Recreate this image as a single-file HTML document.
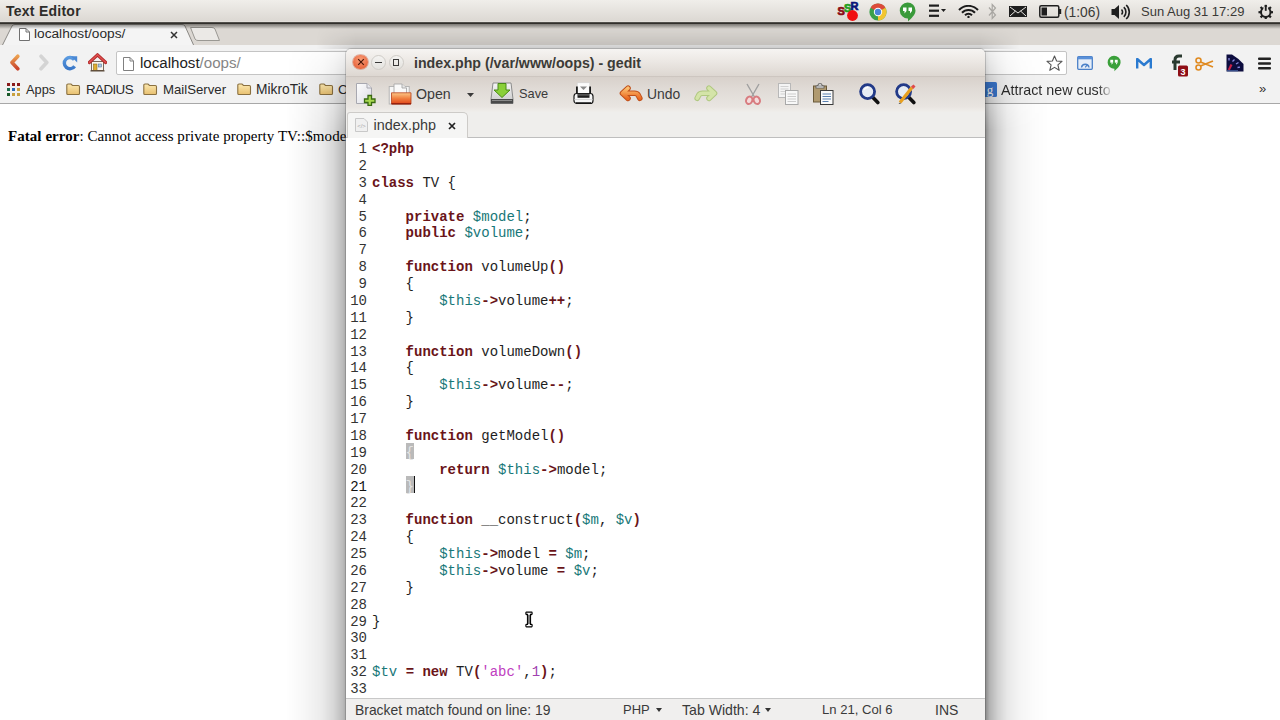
<!DOCTYPE html>
<html><head><meta charset="utf-8">
<style>
*{margin:0;padding:0;box-sizing:border-box}
html,body{width:1280px;height:720px;overflow:hidden;background:#fff;font-family:"Liberation Sans",sans-serif;position:relative}
.a{position:absolute}
#panel{left:0;top:0;width:1280px;height:24px;background:linear-gradient(#f0eeea,#dcd8d3 88%,#ece9e5 92%,#3a3834 94%,#2e2c28);}
#pshadow{left:0;top:24px;width:1280px;height:5px;background:linear-gradient(rgba(40,38,34,.55),rgba(40,38,34,0))}
#panel .t{left:6px;top:3px;font-size:14px;letter-spacing:0.25px;font-weight:bold;color:#2e2d2a}
#tabstrip{left:0;top:24px;width:1280px;height:22px;background:#dcd8d3}
#ctoolbar{left:0;top:45px;width:1280px;height:59px;background:#f2f2f2;border-bottom:1px solid #a8a8a8}
#omni{left:116px;top:51px;width:951px;height:24px;background:#fff;border:1px solid #c4c4c4;border-radius:2px}
#content{left:0;top:104px;width:1280px;height:616px;background:#fff}
#fatal{left:8px;top:128px;font-family:"Liberation Serif",serif;font-size:15px;letter-spacing:0.05px;color:#000;white-space:nowrap}
#gedit{left:346px;top:49px;width:639px;height:671px;background:#f2f1f0;border-radius:5px 5px 0 0;overflow:hidden;box-shadow:0 0 0 1px rgba(60,60,60,.22)}
#shl{left:286px;top:50px;width:60px;height:670px;-webkit-mask-image:linear-gradient(rgba(0,0,0,.15),#000 80px);background:linear-gradient(90deg,rgba(0,0,0,0),rgba(0,0,0,.03) 30%,rgba(0,0,0,.08) 60%,rgba(0,0,0,.16) 80%,rgba(0,0,0,.27) 95%,rgba(0,0,0,.34))}
#shr{left:985px;top:50px;width:64px;height:670px;-webkit-mask-image:linear-gradient(rgba(0,0,0,.2),#000 80px);background:linear-gradient(90deg,rgba(0,0,0,.48),rgba(0,0,0,.3) 7%,rgba(0,0,0,.18) 20%,rgba(0,0,0,.09) 35%,rgba(0,0,0,.04) 55%,rgba(0,0,0,.015) 75%,rgba(0,0,0,0))}
#sht{left:316px;top:24px;width:704px;height:25px;background:linear-gradient(rgba(0,0,0,0),rgba(0,0,0,.04) 40%,rgba(0,0,0,.11) 85%,rgba(0,0,0,.16));-webkit-mask-image:linear-gradient(90deg,transparent,#000 40px,#000 664px,transparent)}
#gtitle{left:0;top:0;width:639px;height:27px;background:linear-gradient(#f6f4f2,#ece8e4 45%,#ddd7d1);border-radius:5px 5px 0 0}
#gtool{left:0;top:27px;width:639px;height:36px;background:linear-gradient(#d8d1cb,#e0dbd6 35%,#e9e5e1 85%,#f0eeeb);border-top:1px solid #cdc6c0}
#gtabs{left:0;top:63px;width:639px;height:26px;background:#efeeec;border-bottom:1px solid #bebebe}
#editor{left:0;top:89px;width:639px;height:560px;background:#fff}
#status{left:0;top:649px;width:639px;height:22px;background:#f0efee;border-top:1px solid #c8c8c8}
.code{font-family:"Liberation Mono",monospace;font-size:14px;line-height:16.875px;white-space:pre;color:#333}
#lnums{left:0;top:3px;width:21px;text-align:right;color:#333}
#lnums b{font-weight:normal;color:#111}
#codetext{left:26px;top:3px;color:#1e1e1e}
.k{font-weight:bold;color:#6a1419}
.o{font-weight:bold;color:#6a1419}
.v{color:#187878}
.s{color:#c040c0}
.n{color:#a040b0}
.hl{color:#e4e4e4;position:relative;z-index:2}
.hlb{background:#bababa;width:7.6px;height:16.4px;left:60px}
#cursor{left:68px;top:338px;width:1px;height:17px;background:#111}
.pt{top:3.5px;font-size:13px;color:#3a3936}
.bm{top:82px;font-size:13.4px;color:#2a2a2a;white-space:nowrap}
.fold{top:83px;width:15px;height:13px}
#omni,#tabstrip div{white-space:nowrap}
.gl{top:9px;color:#3a3a3a;white-space:nowrap}
.st{top:3px;color:#3a3a3a;white-space:nowrap}
</style></head><body>
<div id="panel" class="a">
 <div class="a t">Text Editor</div>
 <!-- SSR -->
 <svg class="a" style="left:836px;top:0px" width="26" height="23" viewBox="0 0 26 23">
  <g font-family="Liberation Sans" font-weight="bold" style="font-weight:bold">
  <text x="1.5" y="15" font-size="11" fill="#8a0c14" stroke="#8a0c14" stroke-width="0.7">S</text>
  <text x="8" y="11.5" font-size="11" fill="#1e9e1e" stroke="#1e9e1e" stroke-width="0.7">S</text>
  <text x="14.5" y="10" font-size="11" fill="#0a1478" stroke="#0a1478" stroke-width="0.7">R</text>
  </g>
  <circle cx="16.5" cy="15.5" r="5.4" fill="#f01010"/>
 </svg>
 <!-- chrome -->
 <svg class="a" style="left:869px;top:3px" width="18" height="18" viewBox="0 0 18 18">
  <circle cx="9" cy="9" r="8.6" fill="#3aa04a"/>
  <path d="M9 9 L1.6 4.7 A8.6 8.6 0 0 1 16.4 4.7 Z" fill="#dd4a3a"/>
  <path d="M9 9 L16.4 4.7 A8.6 8.6 0 0 1 9 17.6 Z" fill="#f2c530"/>
  <circle cx="9" cy="9" r="4.2" fill="#fff"/>
  <circle cx="9" cy="9" r="3.2" fill="#4a86d8"/>
 </svg>
 <!-- hangouts -->
 <svg class="a" style="left:899px;top:2px" width="17" height="20" viewBox="0 0 17 20">
  <path d="M8.5 0.5 A8 8 0 0 1 16.5 8.5 C16.5 13 12 16.5 9 19.5 L9 16.5 A8 8 0 0 1 8.5 0.5 Z" fill="#3a9a3a"/>
  <rect x="4" y="5.5" width="3.5" height="3.5" fill="#fff"/><rect x="9.5" y="5.5" width="3.5" height="3.5" fill="#fff"/>
  <path d="M5.5 9 L5.5 11.5 L7.5 9Z M11 9 L11 11.5 L13 9Z" fill="#fff"/>
 </svg>
 <!-- menu -->
 <svg class="a" style="left:929px;top:4px" width="18" height="14" viewBox="0 0 18 14">
  <rect x="0" y="0.5" width="10" height="2.2" fill="#1e1e1e"/><rect x="0" y="5.6" width="10" height="2.2" fill="#1e1e1e"/><rect x="0" y="10.7" width="10" height="2.2" fill="#1e1e1e"/>
  <path d="M12 5 L17 5 L14.5 8Z" fill="#1e1e1e"/>
 </svg>
 <!-- wifi -->
 <svg class="a" style="left:958px;top:5px" width="21" height="13" viewBox="0 0 21 13">
  <path d="M1 5 A13 13 0 0 1 20 5" stroke="#1a1a1a" stroke-width="2" fill="none"/>
  <path d="M4 7.8 A9 9 0 0 1 17 7.8" stroke="#1a1a1a" stroke-width="2" fill="none"/>
  <path d="M7 10.3 A5 5 0 0 1 14 10.3" stroke="#1a1a1a" stroke-width="2" fill="none"/>
  <circle cx="10.5" cy="12" r="1.2" fill="#1a1a1a"/>
 </svg>
 <!-- bluetooth -->
 <svg class="a" style="left:988px;top:3px" width="9" height="17" viewBox="0 0 9 17">
  <path d="M1 4.5 L7.5 12 L4.2 15.5 L4.2 1.5 L7.5 5 L1 12.5" stroke="#a8a6a2" stroke-width="1.2" fill="none"/>
 </svg>
 <!-- mail -->
 <svg class="a" style="left:1009px;top:6px" width="18" height="11" viewBox="0 0 18 11">
  <rect x="0" y="0" width="18" height="11" fill="#1e1e1e"/>
  <path d="M1 1 L9 7 L17 1 M1 10 L6.5 5 M17 10 L11.5 5" stroke="#e8e6e2" stroke-width="1" fill="none"/>
 </svg>
 <!-- battery -->
 <svg class="a" style="left:1039px;top:5px" width="23" height="13" viewBox="0 0 23 13">
  <rect x="0.8" y="0.8" width="19" height="11.4" rx="1.5" stroke="#1e1e1e" stroke-width="1.5" fill="none"/>
  <rect x="20" y="4" width="2.2" height="5" fill="#1e1e1e"/>
  <rect x="2.5" y="2.5" width="5.5" height="8" fill="#1e1e1e"/>
 </svg>
 <div class="a pt" style="left:1064px;top:4.5px;font-size:13.8px">(1:06)</div>
 <!-- speaker -->
 <svg class="a" style="left:1111px;top:4px" width="20" height="16" viewBox="0 0 20 16">
  <path d="M0.5 5 L3.5 5 L8 1 L8 15 L3.5 11 L0.5 11Z" fill="#1e1e1e"/>
  <path d="M10.5 5.5 A3.5 3.5 0 0 1 10.5 10.5" stroke="#1e1e1e" stroke-width="1.6" fill="none"/>
  <path d="M12.8 3.2 A6.5 6.5 0 0 1 12.8 12.8" stroke="#1e1e1e" stroke-width="1.6" fill="none"/>
  <path d="M15.2 1 A9.5 9.5 0 0 1 15.2 15" stroke="#1e1e1e" stroke-width="1.6" fill="none"/>
 </svg>
 <div class="a pt" style="left:1141px">Sun Aug 31 17:29</div>
 <!-- power gear -->
 <svg class="a" style="left:1257.5px;top:3.5px" width="15.5" height="15.5" viewBox="0 0 17 17">
  <g transform="translate(8.5 9)">
   <circle r="5.2" stroke="#1e1e1e" stroke-width="2.2" fill="none"/>
   <g fill="#1e1e1e"><rect x="-1.2" y="-8" width="2.4" height="3"/><rect x="-1.2" y="5" width="2.4" height="3"/><rect x="5" y="-1.2" width="3" height="2.4"/><rect x="-8" y="-1.2" width="3" height="2.4"/>
   <rect x="-1.2" y="-8" width="2.4" height="3" transform="rotate(45)"/><rect x="-1.2" y="-8" width="2.4" height="3" transform="rotate(-45)"/><rect x="-1.2" y="5" width="2.4" height="3" transform="rotate(45)"/><rect x="-1.2" y="5" width="2.4" height="3" transform="rotate(-45)"/></g>
   <rect x="-2.6" y="-6" width="5.2" height="5" fill="#e4e1dc"/>
   <rect x="-1" y="-8" width="2" height="6.5" fill="#1e1e1e"/>
  </g>
 </svg>
</div>
<div id="tabstrip" class="a" style="z-index:0">
 <svg class="a" style="left:0;top:-1px" width="230" height="23" viewBox="0 0 230 23">
  <path d="M-10 23 L2 23 L12 3 Q13 1.5 15 1.5 L182 1.5 Q184 1.5 185 3 L194 23 L230 23" fill="#f4f4f4" stroke="#8a8884" stroke-width="1"/>
  <path d="M190.5 4.5 L212 4.5 Q214 4.5 215 6 L219.5 17.5 L198 17.5 Q196 17.5 195 16 Z" fill="#ebe9e6" stroke="#9a9893" stroke-width="1"/><path d="M192 5.5 L212 5.5 L213.5 7" stroke="#f6f5f3" stroke-width="1" fill="none"/>
 </svg>
 <svg class="a" style="left:19px;top:4px" width="11" height="13" viewBox="0 0 11 13">
  <path d="M0.5 0.5 L7 0.5 L10.5 4 L10.5 12.5 L0.5 12.5Z" fill="#fff" stroke="#707070" stroke-width="1"/>
  <path d="M7 0.5 L7 4 L10.5 4" fill="none" stroke="#707070" stroke-width="1"/>
 </svg>
 <div class="a" style="left:34px;top:2px;font-size:13.7px;color:#2a2a2a">localhost/oops/</div>
 <svg class="a" style="left:170px;top:7px" width="8" height="8" viewBox="0 0 8 8"><path d="M1 1L7 7M7 1L1 7" stroke="#333" stroke-width="1.5"/></svg>
</div>
<div id="pshadow" class="a"></div>
<div id="ctoolbar" class="a"></div>
<svg class="a" style="left:9px;top:54px" width="12" height="17" viewBox="0 0 12 17"><defs><linearGradient id="bkg" x1="0" y1="0" x2="0" y2="1"><stop offset="0" stop-color="#eca050"/><stop offset="1" stop-color="#c8442c"/></linearGradient></defs><path d="M8.8 2.2 L3 8.5 L8.8 14.8" stroke="url(#bkg)" stroke-width="3.6" fill="none" stroke-linecap="round" stroke-linejoin="round"/></svg>
<svg class="a" style="left:38px;top:54px" width="12" height="17" viewBox="0 0 12 17"><path d="M3 2.2 L8.8 8.5 L3 14.8" stroke="#d4d4d4" stroke-width="3.6" fill="none" stroke-linecap="round" stroke-linejoin="round"/></svg>
<svg class="a" style="left:62px;top:55px" width="16" height="16" viewBox="0 0 16 16"><defs><linearGradient id="rlg" x1="0" y1="0" x2="0" y2="1"><stop offset="0" stop-color="#5a9ae0"/><stop offset="1" stop-color="#3a78c8"/></linearGradient></defs><path d="M12.3 4.6 A5.6 5.6 0 1 0 12.6 11.2" stroke="url(#rlg)" stroke-width="3.4" fill="none"/><path d="M9 1.2 L15.2 1.2 L15.2 7.4 Z" fill="#4a88d4"/></svg>
<svg class="a" style="left:88px;top:53px" width="19" height="19" viewBox="0 0 19 19"><rect x="3.5" y="8.5" width="12" height="9" fill="#faf6ee" stroke="#6a5a4a" stroke-width="0.9"/><rect x="5.5" y="11" width="3.5" height="6.5" fill="#e0b030" stroke="#8a6a20" stroke-width="0.6"/><rect x="10.5" y="11" width="3" height="3" fill="#a8c8e8" stroke="#5a7a9a" stroke-width="0.6"/><path d="M1.3 9.5 L9.5 1.8 L17.7 9.5" stroke="#b02a2a" stroke-width="3.2" fill="none" stroke-linejoin="round" stroke-linecap="round"/><path d="M1.3 9.5 L9.5 1.8 L17.7 9.5" stroke="#e05050" stroke-width="1.4" fill="none" stroke-linejoin="round" stroke-linecap="round"/><rect x="2.5" y="17.2" width="14" height="1.3" fill="#5a4a3a"/></svg>
<div id="omni" class="a">
 <svg class="a" style="left:6px;top:5px" width="11" height="14" viewBox="0 0 11 14">
  <path d="M0.5 0.5 L7 0.5 L10.5 4 L10.5 13.5 L0.5 13.5Z" fill="#fff" stroke="#808080" stroke-width="1"/>
  <path d="M7 0.5 L7 4 L10.5 4" fill="none" stroke="#808080" stroke-width="1"/>
 </svg>
 <div class="a" style="left:23px;top:2px;font-size:15.1px;color:#222">localhost<span style="color:#858585">/oops/</span></div>
 <svg class="a" style="left:929px;top:3px" width="17" height="17" viewBox="0 0 17 17"><path d="M8.5 1 L10.6 6 L16 6.4 L11.9 9.9 L13.2 15.3 L8.5 12.4 L3.8 15.3 L5.1 9.9 L1 6.4 L6.4 6Z" fill="#fff" stroke="#555" stroke-width="1.1" stroke-linejoin="round"/></svg>
</div>
<!-- extension icons -->
<svg class="a" style="left:1077px;top:56px" width="16" height="14" viewBox="0 0 16 14"><rect x="0.7" y="0.7" width="14.6" height="12.6" rx="1" fill="#e6eef8" stroke="#4a80c8" stroke-width="1.3"/><rect x="0.7" y="0.7" width="14.6" height="2.6" fill="#5a90d8"/><path d="M4.5 11.5 A3.8 3.8 0 0 1 12 11.5" stroke="#4a80c8" stroke-width="1.4" fill="none"/><path d="M8.2 11.3 L10.5 8.5" stroke="#4a80c8" stroke-width="1.2"/></svg>
<svg class="a" style="left:1107px;top:55px" width="14" height="17" viewBox="0 0 17 20"><path d="M8.5 0.5 A8 8 0 0 1 16.5 8.5 C16.5 13 12 16.5 9 19.5 L9 16.5 A8 8 0 0 1 8.5 0.5 Z" fill="#3aa03a"/><rect x="4" y="5.5" width="3.5" height="3.5" fill="#fff"/><rect x="9.5" y="5.5" width="3.5" height="3.5" fill="#fff"/><path d="M5.5 9 L5.5 11.5 L7.5 9Z M11 9 L11 11.5 L13 9Z" fill="#fff"/></svg>
<svg class="a" style="left:1136px;top:58px" width="16" height="11" viewBox="0 0 16 11"><path d="M1.2 10.5 L1.2 1 L8 7 L14.8 1 L14.8 10.5" stroke="#2a7ad0" stroke-width="2.4" fill="none" stroke-linejoin="round"/></svg>
<svg class="a" style="left:1171px;top:54px" width="18" height="24" viewBox="0 0 18 24"><path d="M4 16 L4 6 Q4 2 8 2 L11 2 M1 8 L9 8" stroke="#2a3a30" stroke-width="3" fill="none"/><rect x="7" y="11.5" width="10" height="11" rx="1.5" fill="#8e0e16"/><text x="12" y="21" font-family="Liberation Sans" font-weight="bold" font-size="9" fill="#fff" text-anchor="middle">3</text></svg>
<svg class="a" style="left:1195px;top:57px" width="19" height="14" viewBox="0 0 19 14"><circle cx="3.5" cy="3.5" r="2.5" stroke="#e08a20" stroke-width="1.6" fill="none"/><circle cx="3.5" cy="10.5" r="2.5" stroke="#e08a20" stroke-width="1.6" fill="none"/><path d="M5.5 5 L18 10 M5.5 9 L18 4" stroke="#e08a20" stroke-width="1.8"/></svg>
<svg class="a" style="left:1225.5px;top:54px" width="18" height="18" viewBox="0 0 18 18"><path d="M0.5 0.5 L6 0.5 Q12 4 17.5 10 L17.5 17.5 L0.5 17.5 Z" fill="#0c0c3e"/><path d="M3 4 L3 6.5 M6.5 7.5 L8.5 5.5 M10 10 L12.5 8.5 M11.5 13.5 L14 13.2" stroke="#8a8ae0" stroke-width="1.3"/><path d="M2.8 16 L5.5 10.5" stroke="#c82048" stroke-width="2.2"/><rect x="1" y="16.3" width="11" height="1" fill="#4a6aa8"/></svg>
<svg class="a" style="left:1258px;top:57px" width="14" height="13" viewBox="0 0 14 13"><rect x="0" y="0.5" width="13" height="2.4" rx="1" fill="#222"/><rect x="0" y="5.3" width="13" height="2.4" rx="1" fill="#222"/><rect x="0" y="10.1" width="13" height="2.4" rx="1" fill="#222"/></svg>
<!-- bookmarks -->
<svg class="a" style="left:7px;top:83px" width="14" height="13" viewBox="0 0 14 13">
 <rect x="0" y="0" width="3" height="3" fill="#8a1c1c"/><rect x="5" y="0" width="3" height="3" fill="#8a1c1c"/><rect x="10" y="0" width="3" height="3" fill="#8a1c1c"/>
 <rect x="0" y="5" width="3" height="3" fill="#1a6a4a"/><rect x="5" y="5" width="3" height="3" fill="#2a6ab8"/><rect x="10" y="5" width="3" height="3" fill="#c8a040"/>
 <rect x="0" y="10" width="3" height="3" fill="#1a5a2a"/><rect x="5" y="10" width="3" height="3" fill="#c8a040"/><rect x="10" y="10" width="3" height="3" fill="#c8a040"/>
</svg>
<div class="a bm" style="left:26px;font-size:12.8px">Apps</div>
<svg class="a fold" style="left:66px"><use href="#folder"/></svg>
<div class="a bm" style="left:86px;letter-spacing:-0.6px">RADIUS</div>
<svg class="a fold" style="left:143px"><use href="#folder"/></svg>
<div class="a bm" style="left:163px;font-size:13.2px">MailServer</div>
<svg class="a fold" style="left:237px"><use href="#folder"/></svg>
<div class="a bm" style="left:256px;font-size:13.8px">MikroTik</div>
<svg class="a fold" style="left:319px"><use href="#folder"/></svg>
<div class="a bm" style="left:338px">C</div>
<svg class="a" style="left:983px;top:82px" width="14" height="15" viewBox="0 0 14 15"><rect x="0" y="0" width="14" height="15" rx="1.5" fill="#3a78d0"/><text x="7" y="12" font-family="Liberation Serif" font-size="13" fill="#fff" text-anchor="middle">g</text></svg>
<div class="a bm" style="left:1001px;font-size:14.3px;background:linear-gradient(90deg,#2a2a2a 88%,#d8d8d8 100%);-webkit-background-clip:text;color:transparent">Attract new custo</div>
<div class="a" style="left:1259px;top:81px;font-size:13px;color:#333">&raquo;</div>
<svg width="0" height="0" style="position:absolute"><defs><linearGradient id="foldg" x1="0" y1="0" x2="0" y2="1"><stop offset="0" stop-color="#fbe8b0"/><stop offset="1" stop-color="#e8c070"/></linearGradient><g id="folder"><path d="M0.8 2.2 Q0.8 1 2 1 L5 1 L6.5 2.5 L12.3 2.5 Q13.5 2.5 13.5 3.7 L13.5 10.5 Q13.5 11.5 12.5 11.5 L1.8 11.5 Q0.8 11.5 0.8 10.5Z" fill="url(#foldg)" stroke="#8a7040" stroke-width="1.1"/></g></defs></svg>
<div id="content" class="a"></div>
<div id="fatal" class="a"><b>Fatal error</b>: Cannot access private property TV::$model</div>
<div id="sht" class="a"></div><div id="shl" class="a"></div><div id="shr" class="a"></div>
<div id="gedit" class="a">
  <div id="gtitle" class="a">
  <div class="a" style="left:7px;top:5.5px;width:14.5px;height:14.5px;border-radius:50%;background:radial-gradient(circle at 50% 35%,#f8a07a,#ec7048 60%,#d85a30);box-shadow:0 0 0.5px 0.8px rgba(200,90,60,.5)"></div>
  <svg class="a" style="left:10.5px;top:9px" width="8" height="8" viewBox="0 0 8 8"><path d="M1.2 1.2L6.8 6.8M6.8 1.2L1.2 6.8" stroke="#4a1608" stroke-width="1.2"/></svg>
  <div class="a" style="left:24.5px;top:5.5px;width:15px;height:15px;border-radius:50%;background:linear-gradient(#f4f3f1,#e4e2de);border:1px solid #cfccc7"></div>
  <div class="a" style="left:29px;top:12.5px;width:6.5px;height:1.6px;background:#3a3a3a"></div>
  <div class="a" style="left:42.5px;top:5.5px;width:15px;height:15px;border-radius:50%;background:linear-gradient(#f4f3f1,#e4e2de);border:1px solid #cfccc7"></div>
  <div class="a" style="left:47px;top:10px;width:6px;height:6.5px;border:1.4px solid #3a3a3a"></div>
  <div class="a" style="left:68px;top:5.5px;font-size:14.2px;font-weight:bold;color:#3c3b37;white-space:nowrap">index.php (/var/www/oops) - gedit</div>
</div>
<div id="gtool" class="a">
  <!-- new -->
  <svg class="a" style="left:10px;top:6px" width="22" height="23" viewBox="0 0 22 23">
   <defs><linearGradient id="docg" x1="0" y1="0" x2="1" y2="1"><stop offset="0" stop-color="#fdfdfd"/><stop offset="1" stop-color="#dcdce4"/></linearGradient></defs>
   <path d="M0.5 0.5 L11 0.5 L15.5 5 L15.5 20.5 L0.5 20.5Z" fill="url(#docg)" stroke="#a8a8b0" stroke-width="1"/>
   <path d="M11 0.5 L11 5 L15.5 5" fill="#e8e8ee" stroke="#a8a8b0" stroke-width="1"/>
   <path d="M12 12.5 L15.5 12.5 L15.5 16 L19 16 L19 19.5 L15.5 19.5 L15.5 22.5 L12 22.5 L12 19.5 L8.5 19.5 L8.5 16 L12 16Z" fill="#a8d850" stroke="#3a6a12" stroke-width="1.3"/>
  </svg>
  <!-- open -->
  <svg class="a" style="left:42px;top:6px" width="24" height="22" viewBox="0 0 24 22">
   <defs><linearGradient id="openg" x1="0" y1="0" x2="0" y2="1"><stop offset="0" stop-color="#fcc888"/><stop offset="0.5" stop-color="#f08040"/><stop offset="1" stop-color="#e04418"/></linearGradient></defs>
   <rect x="1.2" y="3.5" width="20" height="17.5" fill="#f6f6f6" stroke="#b0b0b0" stroke-width="0.9"/>
   <path d="M6 1 L14 1 L18.5 5 L18.5 11 L6 11Z" fill="#fafafa" stroke="#a8a8a8" stroke-width="0.9"/>
   <path d="M14 1 L14 5 L18.5 5" fill="#e8e8e8" stroke="#a8a8a8" stroke-width="0.9"/>
   <path d="M3.5 9.8 L23 9.8 L23 21 L3.5 21Z" fill="url(#openg)" stroke="#b8401a" stroke-width="0.8"/>
   <rect x="3.5" y="20.2" width="19.5" height="1.2" fill="#8a1a0a"/>
  </svg>
  <div class="a gl" style="left:70px;font-size:14.2px">Open</div>
  <svg class="a" style="left:121px;top:16px" width="7" height="4" viewBox="0 0 7 4"><path d="M0 0L7 0L3.5 4Z" fill="#3a3a3a"/></svg>
  <!-- save -->
  <svg class="a" style="left:144px;top:5px" width="24" height="23" viewBox="0 0 24 23">
   <defs><linearGradient id="saveg" x1="0" y1="0" x2="0" y2="1"><stop offset="0" stop-color="#f6f6f6"/><stop offset="1" stop-color="#c8c8c8"/></linearGradient></defs>
   <path d="M3 1 L21 1 L23 17 L23 21.5 L1 21.5 L1 17Z" fill="url(#saveg)" stroke="#8a8a8a" stroke-width="1"/>
   <rect x="1" y="17" width="22" height="4.5" fill="#4a4a4a"/>
   <rect x="2" y="18" width="20" height="1" fill="#8a8a8a"/>
   <path d="M8 1.5 L16 1.5 L16 8 L20 8 L12 15.5 L4 8 L8 8Z" fill="#8ad038" stroke="#4a8a18" stroke-width="1"/>
  </svg>
  <div class="a gl" style="left:173px;font-size:12.8px">Save</div>
  <!-- print -->
  <svg class="a" style="left:227px;top:5px" width="21" height="23" viewBox="0 0 21 23">
   <rect x="4.2" y="0.8" width="12.6" height="11" fill="#fbfbfb" stroke="#d0d0d0" stroke-width="0.6"/>
   <path d="M7 4.5 L14 4.5 L10.5 8 Z" fill="#8a8a8a"/>
   <rect x="3" y="4.5" width="1.8" height="11" fill="#1a1a1a"/><rect x="16.2" y="4.5" width="1.8" height="11" fill="#1a1a1a"/>
   <rect x="1" y="11.5" width="19" height="10" rx="2.8" fill="#f6f6f6" stroke="#1a1a1a" stroke-width="1.2"/>
   <rect x="4.5" y="11" width="12" height="4.8" fill="#1e1e1e"/>
   <rect x="5" y="12.3" width="11" height="1.2" fill="#6a6a6a"/>
   <rect x="1.5" y="17" width="18" height="1" fill="#d8d8d8"/>
   <path d="M3 21 L18 21" stroke="#111" stroke-width="1.6"/>
  </svg>
  <!-- undo -->
  <svg class="a" style="left:273px;top:7px" width="24" height="20" viewBox="0 0 24 20">
   <defs><linearGradient id="undog" x1="0" y1="0" x2="0" y2="1"><stop offset="0" stop-color="#fcc070"/><stop offset="1" stop-color="#ea6a22"/></linearGradient></defs>
   <path d="M9 4.2 L3.5 9.3 L9 14.4 M4 9.3 L15.5 9.3 Q18 9.3 19 10.8 L20.8 14.2" stroke="#c0501a" stroke-width="5.6" fill="none" stroke-linecap="round" stroke-linejoin="round"/>
   <path d="M9 4.2 L3.5 9.3 L9 14.4 M4 9.3 L15.5 9.3 Q18 9.3 19 10.8 L20.8 14.2" stroke="url(#undog)" stroke-width="3.6" fill="none" stroke-linecap="round" stroke-linejoin="round"/>
  </svg>
  <div class="a gl" style="left:301px;font-size:13.9px">Undo</div>
  <!-- redo -->
  <svg class="a" style="left:348px;top:7px" width="24" height="20" viewBox="0 0 24 20">
   <path d="M15 4.2 L20.5 9.3 L15 14.4 M20 9.3 L8.5 9.3 Q6 9.3 5 10.8 L3.2 14.2" stroke="#b0c880" stroke-width="5.6" fill="none" stroke-linecap="round" stroke-linejoin="round"/>
   <path d="M15 4.2 L20.5 9.3 L15 14.4 M20 9.3 L8.5 9.3 Q6 9.3 5 10.8 L3.2 14.2" stroke="#d4e4a8" stroke-width="3.6" fill="none" stroke-linecap="round" stroke-linejoin="round"/>
  </svg>
  <!-- cut -->
  <svg class="a" style="left:398px;top:6px" width="18" height="22" viewBox="0 0 18 22">
   <path d="M3 1 L10.5 14 M15 1 L7.5 14" stroke="#a0a0a0" stroke-width="1.4"/>
   <ellipse cx="5.2" cy="17.3" rx="3" ry="3.8" transform="rotate(25 5.2 17.3)" stroke="#d87c80" stroke-width="2" fill="#f4dcdc"/>
   <ellipse cx="12.8" cy="17.3" rx="3" ry="3.8" transform="rotate(-25 12.8 17.3)" stroke="#d87c80" stroke-width="2" fill="#f4dcdc"/>
  </svg>
  <!-- copy -->
  <svg class="a" style="left:432px;top:6px" width="21" height="22" viewBox="0 0 21 22">
   <rect x="0.5" y="0.5" width="12" height="14" fill="#f4f4f4" stroke="#b8b8b8" stroke-width="1"/>
   <path d="M2.5 3.5h8M2.5 6h8M2.5 8.5h8M2.5 11h8" stroke="#c8c8c8" stroke-width="0.8"/>
   <rect x="7.5" y="7.5" width="12.5" height="14" fill="#f8f8f8" stroke="#a8a8a8" stroke-width="1"/>
   <path d="M9.5 11h8.5M9.5 13.5h8.5M9.5 16h8.5M9.5 18.5h8.5" stroke="#c0c0c0" stroke-width="0.8"/>
  </svg>
  <!-- paste -->
  <svg class="a" style="left:467px;top:6px" width="21" height="22" viewBox="0 0 21 22">
   <rect x="0.5" y="3" width="13" height="16" fill="#b09a70" stroke="#6a5a3a" stroke-width="1"/>
   <path d="M4.5 3.5 L5.5 0.8 L8.5 0.8 L9.5 3.5 Z" fill="#fff" stroke="#5a5a5a" stroke-width="1"/>
   <rect x="3" y="3" width="8" height="2" fill="#f0f0f0" stroke="#5a5a5a" stroke-width="0.8"/>
   <rect x="7.5" y="7.5" width="12.5" height="14" fill="#fafafa" stroke="#3a3a3a" stroke-width="1"/>
   <path d="M9.5 11h8.5M9.5 13.5h8.5M9.5 16h8.5M9.5 18.5h6" stroke="#5a80b0" stroke-width="1"/>
  </svg>
  <!-- find -->
  <svg class="a" style="left:513px;top:6px" width="21" height="22" viewBox="0 0 21 22">
   <path d="M13.5 14 L18.8 19.5" stroke="#111" stroke-width="3.6" stroke-linecap="round"/>
   <circle cx="8.6" cy="8.6" r="7" stroke="#223a88" stroke-width="2.8" fill="#e6ecf4"/>
   <path d="M5.2 6.8 A3.8 3.8 0 0 1 9.5 4.6" stroke="#fff" stroke-width="1.3" fill="none"/>
  </svg>
  <!-- find replace -->
  <svg class="a" style="left:549px;top:6px" width="22" height="22" viewBox="0 0 22 22">
   <path d="M13.5 14 L18.8 19.5" stroke="#111" stroke-width="3.6" stroke-linecap="round"/>
   <circle cx="8.6" cy="8.6" r="7" stroke="#223a88" stroke-width="2.8" fill="#e6ecf4"/>
   <path d="M5 19.5 L17 4.5" stroke="#e8a020" stroke-width="3.2" stroke-linecap="butt"/>
   <path d="M16 3.5 L18.5 1.5 L20.5 3.5 L18.2 6Z" fill="#e04a4a"/>
   <path d="M5 19.5 L3.5 21 L6 20.5Z" fill="#333"/>
  </svg>
</div>
<div id="gtabs" class="a">
  <div class="a" style="left:1px;top:0;width:121px;height:26px;background:#f5f5f4;border:1px solid #cdcbc8;border-bottom:none;border-radius:3px 5px 0 0"></div>
  <svg class="a" style="left:9px;top:6px" width="13" height="14" viewBox="0 0 13 14">
   <path d="M0.5 0.5 L9 0.5 L12.5 4 L12.5 13.5 L0.5 13.5Z" fill="#f0f0f0" stroke="#c8c8c8" stroke-width="1"/>
   <text x="6.5" y="10" font-family="Liberation Sans" font-size="6" fill="#aaa" text-anchor="middle">&lt;/&gt;</text>
  </svg>
  <div class="a" style="left:27.5px;top:4.5px;font-size:14.4px;color:#3a3a3a">index.php</div>
  <svg class="a" style="left:101.5px;top:9.5px" width="8" height="8" viewBox="0 0 8 8"><path d="M1 1L7 7M7 1L1 7" stroke="#222" stroke-width="1.7"/></svg>
</div>
<div id="editor" class="a">
<div class="a hlb" style="top:305px"></div><div class="a hlb" style="top:338.3px"></div>
<div id="lnums" class="a code">1
2
3
4
5
6
7
8
9
10
11
12
13
14
15
16
17
18
19
20
<b>21</b>
22
23
24
25
26
27
28
29
30
31
32
33</div>
<div id="codetext" class="a code"><span class="k">&lt;?php</span>

<span class="k">class</span> TV {

    <span class="k">private</span> <span class="v">$model</span>;
    <span class="k">public</span> <span class="v">$volume</span>;

    <span class="k">function</span> volumeUp<span class="o">()</span>
    {
        <span class="v">$this</span><span class="o">-&gt;</span>volume<span class="o">++</span>;
    }

    <span class="k">function</span> volumeDown<span class="o">()</span>
    {
        <span class="v">$this</span><span class="o">-&gt;</span>volume<span class="o">--</span>;
    }

    <span class="k">function</span> getModel<span class="o">()</span>
    <span class="hl">{</span>
        <span class="k">return</span> <span class="v">$this</span><span class="o">-&gt;</span>model;
    <span class="hl">}</span>

    <span class="k">function</span> __construct<span class="o">(</span><span class="v">$m</span>, <span class="v">$v</span><span class="o">)</span>
    {
        <span class="v">$this</span><span class="o">-&gt;</span>model <span class="o">=</span> <span class="v">$m</span>;
        <span class="v">$this</span><span class="o">-&gt;</span>volume <span class="o">=</span> <span class="v">$v</span>;
    }

}


<span class="v">$tv</span> <span class="o">=</span> <span class="k">new</span> TV<span class="o">(</span><span class="s">'abc'</span>,<span class="n">1</span><span class="o">)</span>;
</div>
<div id="cursor" class="a"></div>

</div>
  <div id="status" class="a">
  <div class="a st" style="left:9px;font-size:13.9px">Bracket match found on line: 19</div>
  <div class="a st" style="left:277px;font-size:13px">PHP</div>
  <svg class="a" style="left:310px;top:9px" width="6" height="4" viewBox="0 0 6 4"><path d="M0 0L6 0L3 4Z" fill="#333"/></svg>
  <div class="a st" style="left:336px;font-size:14.1px">Tab Width: 4</div>
  <svg class="a" style="left:419px;top:9px" width="6" height="4" viewBox="0 0 6 4"><path d="M0 0L6 0L3 4Z" fill="#333"/></svg>
  <div class="a st" style="left:476px;font-size:13.1px">Ln 21, Col 6</div>
  <div class="a st" style="left:589px;font-size:14px">INS</div>
</div>
</div>
<svg class="a" style="left:524.5px;top:611px" width="8" height="17" viewBox="0 0 9 17" preserveAspectRatio="none">
 <path d="M1.5 1.2 L7.5 1.2 Q8 1.2 8 2 L8 2.8 Q8 3.5 7.3 3.5 L6.2 3.5 L6.2 13.3 L7.3 13.3 Q8 13.3 8 14 L8 15 Q8 15.8 7.5 15.8 L1.5 15.8 Q1 15.8 1 15 L1 14 Q1 13.3 1.7 13.3 L2.8 13.3 L2.8 3.5 L1.7 3.5 Q1 3.5 1 2.8 L1 2 Q1 1.2 1.5 1.2Z" fill="#fff" stroke="#000" stroke-width="1.3"/>
 <rect x="3.3" y="3.8" width="2.4" height="9.3" fill="#777"/>
</svg>
</body></html>
